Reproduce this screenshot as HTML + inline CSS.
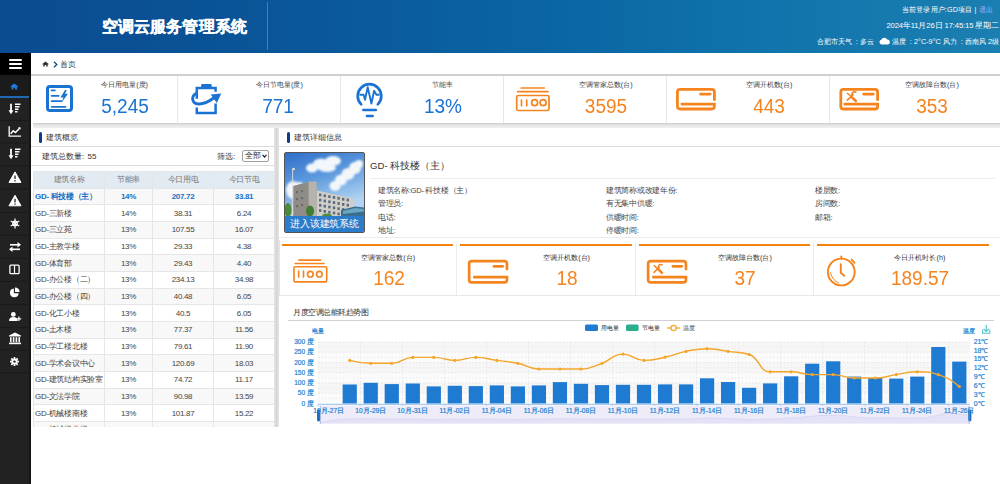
<!DOCTYPE html>
<html><head><meta charset="utf-8">
<style>
*{margin:0;padding:0;box-sizing:border-box}
html,body{width:1000px;height:484px;overflow:hidden;background:#fff;font-family:"Liberation Sans",sans-serif;color:#333}
.a{position:absolute}
#hdr{left:0;top:0;width:1000px;height:53px;background:linear-gradient(90deg,#0b4b91 0%,#0a5498 25%,#0a65a4 55%,#1276ad 80%,#1c7fb1 100%)}
#hdr .t{left:102px;top:17px;font-size:16px;font-weight:bold;color:#fff;white-space:nowrap;letter-spacing:0.1px;-webkit-text-stroke:0.3px #fff}
#hdr .sep{left:267px;top:2px;width:1px;height:48px;background:rgba(255,255,255,0.25)}
.hr{right:1px;color:#fff;font-size:8px;white-space:nowrap;text-align:right}
#side{left:0;top:53px;width:31px;height:431px;background:#222}
#side .hb{left:0;top:0;width:31px;height:22px;background:#000}
#side .hb i{position:absolute;left:9px;width:13px;height:2px;background:#fff;border-radius:1px}
.si{position:absolute;left:0;width:31px;height:23px}
#bc{left:31px;top:53px;width:969px;height:23px;background:#fff;border-bottom:2px solid #d0d0d0}
#stats{left:31px;top:76px;width:969px;height:47px;background:#fff}
.ssep{top:0;width:1px;height:47px;background:#e8e8e8}
.stt{font-size:7.2px;line-height:9px;color:#3c3c3c;white-space:nowrap;text-align:center;width:120px}
.stn{font-size:20px;line-height:22px;white-space:nowrap;text-align:center;width:120px;transform:scaleX(0.95)}
#gap{left:33px;top:123px;width:967px;height:5px;z-index:1;background:linear-gradient(#cbcbcb,#dedede 30%,#e9e9e9 60%,#efefef)}
#lp{left:31px;top:127px;width:244px;height:300px;background:#fff;overflow:hidden}
#mid{left:274px;top:127px;width:5px;height:300px;background:linear-gradient(90deg,#e6e6e6,#d6d6d6 50%,#e4e4e4)}
#rp{left:279px;top:127px;width:721px;height:300px;background:#fff;overflow:hidden}
.ptl{font-size:8px;color:#333;white-space:nowrap}
.bar{width:3px;height:11px;background:#0b3b8c;border-radius:1.5px}
.hl{height:1px;background:#dcdcdc}
table{border-collapse:collapse;position:absolute;left:2px;top:44px;width:241px;table-layout:fixed}
td,th{height:16.68px;font-size:8px;letter-spacing:-0.3px;font-weight:normal;text-align:center;border:1px solid #e6e6e6;white-space:nowrap;overflow:hidden;color:#444;padding:0;line-height:15px}
th{background:#e3ebf2;color:#777;height:16.5px}
tr.o td{background:#f8f8f8}
td:first-child{text-align:left;padding-left:1px}
tr.sel td{color:#1a6fc6;font-weight:bold}
.inf{font-size:7.6px;color:#444;white-space:nowrap;letter-spacing:-0.3px}
.bx{top:117px;height:52px}
.bxb{top:0;height:2px;background:#f5820f}
.bt{font-size:7.2px;line-height:9px;color:#333;white-space:nowrap;text-align:center;width:120px}
.bn{font-size:20px;line-height:22px;color:#f5841f;white-space:nowrap;text-align:center;width:120px;transform:scaleX(0.95)}
.yl{font-size:6.6px;color:#1f83d0;-webkit-text-stroke:0.2px #1f83d0;white-space:nowrap;text-align:right;width:30px;line-height:8px}
.yr{font-size:6.9px;color:#1f83d0;-webkit-text-stroke:0.2px #1f83d0;white-space:nowrap;line-height:8px}
.xl{font-size:6.6px;color:#1f83d0;-webkit-text-stroke:0.2px #1f83d0;white-space:nowrap;text-align:center;width:50px;line-height:8px}
</style></head><body>
<!-- header -->
<div id="hdr" class="a">
  <div class="a t">空调云服务管理系统</div>
  <div class="a sep"></div>
  <div class="a hr" style="top:5px;right:7px;font-size:7.2px;letter-spacing:0.15px">当前登录用户:GD项目 | <span style="color:#9fb4ff">退出</span></div>
  <div class="a hr" style="top:21px;font-size:7.6px;letter-spacing:-0.1px">2024年11月26日 17:45:15 星期二</div>
  <div class="a hr" style="top:37px;font-size:7.3px">合肥市天气<span style="display:inline-block;width:6px">:</span>&nbsp;多云 <svg width="11" height="8" viewBox="0 0 11 8" style="vertical-align:-1px;margin:0 2px 0 3px"><path d="M2.5 7.5 A2.4 2.4 0 0 1 2.3 2.8 A3.2 3.2 0 0 1 8.2 2.6 A2.45 2.45 0 0 1 8.6 7.5 Z" fill="#fff"/></svg>温度<span style="display:inline-block;width:6px">:</span>&nbsp;2°C-9°C 风力<span style="display:inline-block;width:6px">:</span>&nbsp;西南风 2级</div>
</div>
<!-- sidebar -->
<div id="side" class="a">
  <div class="a hb"><i style="top:6px"></i><i style="top:10px"></i><i style="top:14px"></i></div>
  <div class="si" style="top:22px;width:29px;background:#1b1b1b;border-bottom:2px solid #1f68b4">
    <svg class="a" style="left:10px;top:7.5px" width="8.5" height="7" viewBox="0 0 11 9"><path d="M5.5 0.5 L0.5 4.6 L1.3 5.4 L2 4.8 V8.5 H4.4 V6.2 H6.6 V8.5 H9 V4.8 L9.7 5.4 L10.5 4.6 Z" fill="#1e7be0"/></svg>
  </div>
</div>
<!-- breadcrumb -->
<!--SIDEICONS--><svg class="a" style="left:0;top:0" width="31" height="484" viewBox="0 0 31 484"><rect x="29" y="74" width="2" height="410" fill="#151515"/><rect x="0" y="119.9" width="31" height="1" fill="#1a1a1a"/><rect x="0" y="142.5" width="31" height="1" fill="#1a1a1a"/><rect x="0" y="165.0" width="31" height="1" fill="#1a1a1a"/><rect x="0" y="188.6" width="31" height="1" fill="#1a1a1a"/><rect x="0" y="212.0" width="31" height="1" fill="#1a1a1a"/><rect x="0" y="234.6" width="31" height="1" fill="#1a1a1a"/><rect x="0" y="258.0" width="31" height="1" fill="#1a1a1a"/><rect x="0" y="280.8" width="31" height="1" fill="#1a1a1a"/><rect x="0" y="303.8" width="31" height="1" fill="#1a1a1a"/><rect x="0" y="327.2" width="31" height="1" fill="#1a1a1a"/><rect x="0" y="349.6" width="31" height="1" fill="#1a1a1a"/><rect x="0" y="372.4" width="31" height="1" fill="#1a1a1a"/><g transform="translate(15 108.7)"><path d="M-4 -5 V3" stroke="#fff" stroke-width="1.8"/><path d="M-6.5 1.5 L-4 5.5 L-1.5 1.5 Z" fill="#fff"/><path d="M0 -4.5 H5.5 M0 -2 H4.5 M0 0.5 H3.5 M0 3 H2.5" stroke="#fff" stroke-width="1.6"/></g><g transform="translate(15 131.3)"><path d="M-5.8 -5 V4.8 H6" fill="none" stroke="#fff" stroke-width="1.3"/><path d="M-4.3 2.5 L-1.8 -0.5 L0.5 1.2 L4.8 -3.2" fill="none" stroke="#fff" stroke-width="1.5"/><path d="M3 -4 L5.5 -4 L5.5 -1.5 Z" fill="#fff"/></g><g transform="translate(15 153.8)"><path d="M-4 -5 V3" stroke="#fff" stroke-width="1.8"/><path d="M-6.5 1.5 L-4 5.5 L-1.5 1.5 Z" fill="#fff"/><path d="M0 -4.5 H5.5 M0 -2 H4.5 M0 0.5 H3.5 M0 3 H2.5" stroke="#fff" stroke-width="1.6"/></g><g transform="translate(15 177.4)"><path d="M0 -5.5 L6 5 H-6 Z" fill="#fff" stroke="#fff" stroke-width="1" stroke-linejoin="round"/><path d="M0 -2 V1.6 M0 2.8 V4" stroke="#222" stroke-width="1.3"/></g><g transform="translate(15 200.8)"><path d="M0 -5.5 L6 5 H-6 Z" fill="#fff" stroke="#fff" stroke-width="1" stroke-linejoin="round"/><path d="M0 -2 V1.6 M0 2.8 V4" stroke="#222" stroke-width="1.3"/></g><g transform="translate(15 223.4)" stroke="#fff" stroke-width="1.2" fill="none"><path d="M0 -5 V5 M-4.3 -2.5 L4.3 2.5 M-4.3 2.5 L4.3 -2.5"/><circle r="2.3"/></g><g transform="translate(15 246.8)"><path d="M-5 -2 H3" stroke="#fff" stroke-width="1.6"/><path d="M2.5 -4.8 L6 -2 L2.5 0.8 Z" fill="#fff"/><path d="M5 2.5 H-3" stroke="#fff" stroke-width="1.6"/><path d="M-2.5 -0.3 L-6 2.5 L-2.5 5.3 Z" fill="#fff"/></g><g transform="translate(14.5 269.4)"><rect x="-4.6" y="-4.3" width="9.2" height="8.6" rx="1" fill="none" stroke="#fff" stroke-width="1.3"/><path d="M0 -4 V4" stroke="#fff" stroke-width="1.2"/></g><g transform="translate(14.5 292.6) scale(0.88)"><path d="M-0.7 -4.8 A5 5 0 1 0 4.8 0.7 H-0.7 Z" fill="#fff"/><path d="M0.6 -5.8 A5 5 0 0 1 5.8 -0.6 H0.6 Z" fill="#fff"/></g><g transform="translate(15 316.5) scale(0.92)"><circle cx="-1.8" cy="-2.3" r="2.6" fill="#fff"/><path d="M-6.5 5 Q-6.5 0.5 -1.8 0.5 Q2.9 0.5 2.9 5 Z" fill="#fff"/><path d="M4.2 0 V5 M1.7 2.5 H6.7" stroke="#fff" stroke-width="1.3"/></g><g transform="translate(15 338.4)" fill="#fff"><path d="M0 -6 L6 -3 V-2 H-6 V-3 Z"/><rect x="-5" y="-1.2" width="1.6" height="5"/><rect x="-2.2" y="-1.2" width="1.6" height="5"/><rect x="0.6" y="-1.2" width="1.6" height="5"/><rect x="3.4" y="-1.2" width="1.6" height="5"/><rect x="-6" y="4.2" width="12" height="1.6"/></g><g transform="translate(14.5 361.6) scale(0.8)" fill="#fff"><rect x="-1.1" y="-5.6" width="2.2" height="2.4" transform="rotate(0)"/><rect x="-1.1" y="-5.6" width="2.2" height="2.4" transform="rotate(45)"/><rect x="-1.1" y="-5.6" width="2.2" height="2.4" transform="rotate(90)"/><rect x="-1.1" y="-5.6" width="2.2" height="2.4" transform="rotate(135)"/><rect x="-1.1" y="-5.6" width="2.2" height="2.4" transform="rotate(180)"/><rect x="-1.1" y="-5.6" width="2.2" height="2.4" transform="rotate(225)"/><rect x="-1.1" y="-5.6" width="2.2" height="2.4" transform="rotate(270)"/><rect x="-1.1" y="-5.6" width="2.2" height="2.4" transform="rotate(315)"/><circle r="3.8"/><circle r="1.5" fill="#222"/></g></svg><!--/SIDEICONS-->
<div id="bc" class="a">
  <svg class="a" style="left:11px;top:8px" width="7" height="6" viewBox="0 0 11 9"><path d="M5.5 0.5 L0.5 4.6 L1.3 5.4 L2 4.8 V8.5 H4.4 V6.2 H6.6 V8.5 H9 V4.8 L9.7 5.4 L10.5 4.6 Z" fill="#333"/></svg>
  <svg class="a" style="left:22px;top:8px" width="5" height="7" viewBox="0 0 5 7"><path d="M1 0.8 L3.8 3.5 L1 6.2" stroke="#1a4f8a" stroke-width="1.4" fill="none"/></svg>
  <div class="a" style="left:29px;top:6px;font-size:8px;color:#444">首页</div>
</div>
<!-- stats -->
<div id="stats" class="a">
  <div class="a ssep" style="left:146px"></div>
  <div class="a ssep" style="left:309px"></div>
  <div class="a ssep" style="left:472px"></div>
  <div class="a ssep" style="left:635px"></div>
  <div class="a ssep" style="left:798px"></div>
  <!-- card1 icon: doc w/ lightning -->
  <svg class="a" style="left:15px;top:9px" width="27" height="27" viewBox="0 0 27 27">
    <rect x="1.5" y="1.5" width="24" height="24" rx="2.5" fill="none" stroke="#1a73d2" stroke-width="3"/>
    <g stroke="#1a73d2" stroke-width="1.8" stroke-linecap="round" fill="none">
      <path d="M5.6 5.4 H8.8"/><path d="M5.6 10.8 H12.6"/><path d="M5.6 16.2 H15.4"/><path d="M5.6 21.8 H19.5"/>
    </g>
    <path d="M19 5 L14.4 12.6 H17.4 L15.6 17.4 L22 8.8 H19 L20.8 5 Z" fill="#1a73d2"/>
  </svg>
  <div class="a stt" style="left:33.6px;top:4px">今日用电量(度)</div>
  <div class="a stn" style="left:33.6px;top:19px;color:#1a73d2">5,245</div>
  <!-- card2 icon battery -->
  <svg class="a" style="left:154px;top:4px" width="50" height="38" viewBox="0 0 50 38">
    <rect x="16.1" y="3.9" width="10.6" height="3.4" rx="1" fill="#1a73d2"/>
    <path d="M11.8 18.8 V8.1 H30.6 V11.8 M30.6 23.5 V33 H11.8 V27.5" fill="none" stroke="#1a73d2" stroke-width="2.5"/>
    <path d="M11 13.5 C6 16.5, 6.5 23.5, 13.5 24 C18.5 24.3, 24 21.5, 29.5 17.5" fill="none" stroke="#1a73d2" stroke-width="2.8" stroke-linecap="round"/>
    <path d="M25.8 14.6 L36.3 13.5 L31.8 23 Z" fill="#1a73d2"/>
  </svg>
  <div class="a stt" style="left:188.5px;top:4px">今日节电量(度)</div>
  <div class="a stn" style="left:187.3px;top:19px;color:#1a73d2">771</div>
  <!-- card3 bulb -->
  <svg class="a" style="left:319px;top:2px" width="50" height="44" viewBox="0 0 50 44">
    <path d="M11.2 26.4 A11.8 11.8 0 1 1 27.8 26.4" fill="none" stroke="#1a73d2" stroke-width="2.7" stroke-linecap="round"/>
    <path d="M9.5 16.8 H13.6 L15 21.8 L17.7 9.1 L21.4 25.5 L24.1 12.7 L26.4 16.8 H29.5" fill="none" stroke="#1a73d2" stroke-width="1.9" stroke-linejoin="round"/>
    <path d="M13.4 32 H25.8 M17 38 H22.6" stroke="#1a73d2" stroke-width="2.7" stroke-linecap="round"/>
  </svg>
  <div class="a stt" style="left:351.5px;top:4px">节能率</div>
  <div class="a stn" style="left:351.9px;top:19px;color:#1a73d2">13%</div>
  <!-- card4 -->
  <svg class="a" style="left:479px;top:4px" width="50" height="36" viewBox="0 0 50 36">
    <g fill="none" stroke="#f5841f" stroke-width="1.7" stroke-linecap="round">
      <path d="M11.2 8 H34.2 M7.8 11.7 H37.9"/>
      <rect x="6.7" y="15.5" width="32.3" height="15" rx="1.5"/>
      <path d="M11.5 20 V25.7 M16.7 20 V25.7"/>
      <circle cx="24.6" cy="22.7" r="3"/><circle cx="33.1" cy="22.7" r="3"/>
    </g>
  </svg>
  <div class="a stt" style="left:514.7px;top:4px">空调管家总数(台)</div>
  <div class="a stn" style="left:514.9px;top:19px;color:#f5841f">3595</div>
  <!-- card5 -->
  <svg class="a" style="left:639px;top:4px" width="50" height="36" viewBox="0 0 50 36">
    <path d="M44.4 19.7 V12 Q44.4 9.3 41.7 9.3 H10.1 Q7.4 9.3 7.4 12 V26.3 Q7.4 29 10.1 29 H41.7 Q44.4 29 44.4 26.3 V24.2 H11.9" fill="none" stroke="#f5841f" stroke-width="2.8" stroke-linecap="round"/>
    <path d="M30.5 14.1 H40.2" stroke="#f5841f" stroke-width="2.8" stroke-linecap="round"/>
  </svg>
  <div class="a stt" style="left:678.0px;top:4px">空调开机数(台)</div>
  <div class="a stn" style="left:677.5px;top:19px;color:#f5841f">443</div>
  <!-- card6 -->
  <svg class="a" style="left:804px;top:4px" width="50" height="36" viewBox="0 0 50 36">
    <path d="M42.6 19.7 V12 Q42.6 9.4 40 9.4 H8.4 Q5.8 9.4 5.8 12 V26.4 Q5.8 29 8.4 29 H40 Q42.6 29 42.6 26.4 V24.2 H9.7" fill="none" stroke="#f5841f" stroke-width="2.8" stroke-linecap="round"/>
    <path d="M28.6 14.1 H38.3" stroke="#f5841f" stroke-width="2.8" stroke-linecap="round"/>
    <path d="M12.4 13.2 L17.5 17.8" stroke="#f5841f" stroke-width="1.5" stroke-linecap="round"/>
    <path d="M17.3 17.6 L20.8 21" stroke="#f5841f" stroke-width="2.6" stroke-linecap="round"/>
    <path d="M12.3 20.2 L18 14.8" stroke="#f5841f" stroke-width="1.6" stroke-linecap="round"/>
    <path d="M17.6 16 A2.3 2.3 0 1 1 21.4 12.6" fill="none" stroke="#f5841f" stroke-width="1.6"/>
  </svg>
  <div class="a stt" style="left:841.0px;top:4px">空调故障台数(台)</div>
  <div class="a stn" style="left:841.0px;top:19px;color:#f5841f">353</div>
</div>
<div id="gap" class="a"></div>
<div id="lp" class="a">
  <div class="a bar" style="left:8px;top:5px"></div>
  <div class="a ptl" style="left:15px;top:5px">建筑概览</div>
  <div class="a hl" style="left:0;top:19px;width:244px"></div>
  <div class="a ptl" style="left:11px;top:24px">建筑总数量<span style="display:inline-block;width:5.5px">:</span>55</div>
  <div class="a ptl" style="left:186px;top:24px">筛选<span style="display:inline-block;width:5.5px">:</span></div>
  <div class="a" style="left:211px;top:23px;width:27px;height:12px;border:1px solid #a0a0a0;border-radius:2px;font-size:8px;line-height:10px;padding-left:2px;color:#333">全部<svg style="position:absolute;right:1px;top:3px" width="5" height="4" viewBox="0 0 5 4"><path d="M0.5 0.8 L2.5 3 L4.5 0.8" stroke="#222" stroke-width="1.2" fill="none"/></svg></div>
  <div class="a hl" style="left:0;top:38px;width:244px"></div>
  <table><colgroup><col style="width:71px"><col style="width:48px"><col style="width:61px"><col style="width:61px"></colgroup>
  <tr><th>建筑名称</th><th>节能率</th><th>今日用电</th><th>今日节电</th></tr>
  <tr class="o sel"><td>GD- 科技楼（主）</td><td>14%</td><td>207.72</td><td>33.81</td></tr>
  <tr><td>GD-三新楼</td><td>14%</td><td>38.31</td><td>6.24</td></tr>
  <tr class="o"><td>GD-三立苑</td><td>13%</td><td>107.55</td><td>16.07</td></tr>
  <tr><td>GD-主教学楼</td><td>13%</td><td>29.33</td><td>4.38</td></tr>
  <tr class="o"><td>GD-体育部</td><td>13%</td><td>29.43</td><td>4.40</td></tr>
  <tr><td>GD-办公楼（二）</td><td>13%</td><td>234.13</td><td>34.98</td></tr>
  <tr class="o"><td>GD-办公楼（四）</td><td>13%</td><td>40.48</td><td>6.05</td></tr>
  <tr><td>GD-化工小楼</td><td>13%</td><td>40.5</td><td>6.05</td></tr>
  <tr class="o"><td>GD-土木楼</td><td>13%</td><td>77.37</td><td>11.56</td></tr>
  <tr><td>GD-学工楼北楼</td><td>13%</td><td>79.61</td><td>11.90</td></tr>
  <tr class="o"><td>GD-学术会议中心</td><td>13%</td><td>120.69</td><td>18.03</td></tr>
  <tr><td>GD-建筑结构实验室</td><td>13%</td><td>74.72</td><td>11.17</td></tr>
  <tr class="o"><td>GD-文法学院</td><td>13%</td><td>90.98</td><td>13.59</td></tr>
  <tr><td>GD-机械楼南楼</td><td>13%</td><td>101.87</td><td>15.22</td></tr>
  <tr class="o"><td>GD-机械楼北楼</td><td>13%</td><td>155.31</td><td>23.20</td></tr>
  <tr><td>GD-计算机楼</td><td>13%</td><td>88.10</td><td>13.16</td></tr>
  </table>
  <div class="a" style="left:243px;top:44px;width:2px;height:256px;background:#d5d5d5"></div>
</div>
<div id="mid" class="a"></div>
<div id="rp" class="a">
  <div class="a bar" style="left:8px;top:5px"></div>
  <div class="a ptl" style="left:15px;top:5px">建筑详细信息</div>
  <div class="a hl" style="left:0;top:19px;width:721px"></div>
  <!-- building image -->
  <div class="a" style="left:5px;top:25px;width:81px;height:81px;border:1px solid #555;border-radius:2px;overflow:hidden;background:#4d8fd6">
    <svg class="a" style="left:0;top:0" width="79" height="79" viewBox="0 0 79 79">
      <defs><linearGradient id="sky" x1="0" y1="0" x2="0.3" y2="1"><stop offset="0" stop-color="#2f6fca"/><stop offset="0.4" stop-color="#5e9ade"/><stop offset="0.8" stop-color="#b2d4f2"/></linearGradient>
      <filter id="bl" x="-20%" y="-20%" width="140%" height="140%"><feGaussianBlur stdDeviation="1"/></filter></defs>
      <rect width="79" height="79" fill="url(#sky)"/>
      <g fill="#f3f7fb" filter="url(#bl)">
        <ellipse cx="27" cy="15" rx="6" ry="4.5"/><ellipse cx="36" cy="11" rx="8" ry="5.5"/><ellipse cx="48" cy="8" rx="8" ry="5"/><ellipse cx="42" cy="15" rx="9" ry="4"/>
        <ellipse cx="50" cy="33" rx="5.5" ry="5"/><ellipse cx="56" cy="27" rx="6" ry="5.5"/><ellipse cx="63" cy="21" rx="6.5" ry="6"/><ellipse cx="70" cy="15" rx="6" ry="6"/><ellipse cx="74" cy="11" rx="4" ry="4"/>
        <ellipse cx="8" cy="37" rx="7" ry="9"/><ellipse cx="14" cy="33" rx="5" ry="4"/>
      </g>
      <path d="M31.6 37.5 L68 45.5 L68 64 L31.6 64 Z" fill="#d2cfc9"/>
      <rect x="34.0" y="40.5" width="2.4" height="2.8" fill="#5b6c80"/><rect x="38.6" y="41.4" width="2.4" height="2.8" fill="#5b6c80"/><rect x="43.2" y="42.2" width="2.4" height="2.8" fill="#5b6c80"/><rect x="47.8" y="43.0" width="2.4" height="2.8" fill="#5b6c80"/><rect x="52.4" y="43.9" width="2.4" height="2.8" fill="#5b6c80"/><rect x="57.0" y="44.8" width="2.4" height="2.8" fill="#5b6c80"/><rect x="61.6" y="45.6" width="2.4" height="2.8" fill="#5b6c80"/><rect x="34.0" y="45.7" width="2.4" height="2.8" fill="#5b6c80"/><rect x="38.6" y="46.6" width="2.4" height="2.8" fill="#5b6c80"/><rect x="43.2" y="47.4" width="2.4" height="2.8" fill="#5b6c80"/><rect x="47.8" y="48.2" width="2.4" height="2.8" fill="#5b6c80"/><rect x="52.4" y="49.1" width="2.4" height="2.8" fill="#5b6c80"/><rect x="57.0" y="50.0" width="2.4" height="2.8" fill="#5b6c80"/><rect x="61.6" y="50.8" width="2.4" height="2.8" fill="#5b6c80"/><rect x="34.0" y="50.9" width="2.4" height="2.8" fill="#5b6c80"/><rect x="38.6" y="51.8" width="2.4" height="2.8" fill="#5b6c80"/><rect x="43.2" y="52.6" width="2.4" height="2.8" fill="#5b6c80"/><rect x="47.8" y="53.4" width="2.4" height="2.8" fill="#5b6c80"/><rect x="52.4" y="54.3" width="2.4" height="2.8" fill="#5b6c80"/><rect x="57.0" y="55.1" width="2.4" height="2.8" fill="#5b6c80"/><rect x="61.6" y="56.0" width="2.4" height="2.8" fill="#5b6c80"/><rect x="34.0" y="56.1" width="2.4" height="2.8" fill="#5b6c80"/><rect x="38.6" y="57.0" width="2.4" height="2.8" fill="#5b6c80"/><rect x="43.2" y="57.8" width="2.4" height="2.8" fill="#5b6c80"/><rect x="47.8" y="58.6" width="2.4" height="2.8" fill="#5b6c80"/><rect x="52.4" y="59.5" width="2.4" height="2.8" fill="#5b6c80"/><rect x="57.0" y="60.4" width="2.4" height="2.8" fill="#5b6c80"/><rect x="61.6" y="61.2" width="2.4" height="2.8" fill="#5b6c80"/>
      <path d="M8.4 33 L23.5 29 L31.6 29 L31.6 64 L8.4 64 Z" fill="#a19e98"/>
      <path d="M23.5 28.5 H31.6 V64 H23.5 Z" fill="#b6b3ad"/>
      <path d="M8.4 33 L23.5 29 V64 H8.4 Z" fill="#8f8c88"/>
      <g fill="#6c6a68"><rect x="11" y="38" width="2" height="2.2"/><rect x="16" y="37" width="2" height="2.2"/><rect x="11" y="45" width="2" height="2.2"/><rect x="16" y="44" width="2" height="2.2"/><rect x="11" y="52" width="2" height="2.2"/><rect x="16" y="51" width="2" height="2.2"/></g>
      <path d="M56 57 L70 53.5 L79 54.5 L79 64 L56 64 Z" fill="#3a6f8f"/>
      <path d="M58 58 L70 55 L79 56 V58.5 L58 61 Z" fill="#6aa6c4"/>
      <ellipse cx="25" cy="58" rx="4" ry="5.5" fill="#3f7d33"/><ellipse cx="3" cy="57" rx="3.5" ry="7" fill="#4b8a3a"/><ellipse cx="42" cy="63" rx="5" ry="2.5" fill="#4f8f3c"/>
      <rect x="7.2" y="16" width="0.9" height="48" fill="#dcdcdc"/><circle cx="8.6" cy="16" r="1.3" fill="#eee6b8"/>
    </svg>
    <div class="a" style="left:0;top:63px;width:79px;height:16px;background:#2b7ccb;color:#fff;font-size:10px;line-height:16px;text-align:center;white-space:nowrap;letter-spacing:-0.1px">进入该建筑系统</div>
  </div>
  <div class="a" style="left:91px;top:33px;font-size:9.6px;color:#333;white-space:nowrap">GD- 科技楼（主）</div>
  <div class="a hl" style="left:91px;top:51px;width:625px;background:#eeeeee"></div>
  <div class="a inf" style="left:99px;top:59px">建筑名称:GD- 科技楼（主）</div>
  <div class="a inf" style="left:99px;top:72px">管理员:</div>
  <div class="a inf" style="left:99px;top:86px">电话:</div>
  <div class="a inf" style="left:99px;top:99px">地址:</div>
  <div class="a inf" style="left:327px;top:59px">建筑简称或改建年份:</div>
  <div class="a inf" style="left:327px;top:72px">有无集中供暖:</div>
  <div class="a inf" style="left:327px;top:86px">供暖时间:</div>
  <div class="a inf" style="left:327px;top:99px">停暖时间:</div>
  <div class="a inf" style="left:536px;top:59px">楼层数:</div>
  <div class="a inf" style="left:536px;top:72px">房间数:</div>
  <div class="a inf" style="left:536px;top:86px">邮箱:</div>
  <div class="a hl" style="left:0;top:110px;width:721px;background:#ececec"></div>
  <!-- 4 boxes -->
  <div class="a" style="left:0;top:113px;width:721px;height:56px">
    <div class="a" style="left:0;top:0;width:1px;height:56px;background:#e6e6e6"></div>
    <div class="a" style="left:177px;top:3px;width:1px;height:53px;background:#ececec"></div>
    <div class="a" style="left:356px;top:3px;width:1px;height:53px;background:#ececec"></div>
    <div class="a" style="left:534px;top:3px;width:1px;height:53px;background:#ececec"></div>
    <div class="a hl" style="left:0;top:55px;width:721px;background:#e8e8e8"></div>
    <div class="a bxb" style="left:3px;top:4px;width:171px"></div>
    <div class="a bxb" style="left:181px;top:4px;width:172px"></div>
    <div class="a bxb" style="left:360px;top:4px;width:171px"></div>
    <div class="a bxb" style="left:538px;top:4px;width:172px"></div>
    <svg class="a" style="left:10.5px;top:17px" width="41.5" height="29" viewBox="0 0 40 28">
      <g fill="none" stroke="#f5841f" stroke-width="1.6" stroke-linecap="round">
        <path d="M8.5 3 H29.6 M5 6.3 H32.8"/>
        <rect x="3.8" y="9.4" width="31.6" height="14.6" rx="1.3"/>
        <path d="M8.3 13.6 V19.4 M13 13.6 V19.4"/>
        <circle cx="19.6" cy="16.6" r="2.7"/><circle cx="28.3" cy="16.6" r="2.7"/>
      </g>
    </svg>
    <div class="a bt" style="left:49.2px;top:12.7px">空调管家总数(台)</div>
    <div class="a bn" style="left:49.5px;top:27.1px">162</div>
    <svg class="a" style="left:185.5px;top:16.5px" width="45.5" height="29" viewBox="0 0 44 28">
      <path d="M40.6 11.5 V6.5 Q40.6 4 38.1 4 H6.5 Q4 4 4 6.5 V22 Q4 24.5 6.5 24.5 H38.1 Q40.6 24.5 40.6 22 V19.5 H9" fill="none" stroke="#f5841f" stroke-width="2.6" stroke-linecap="round"/>
      <path d="M28 9 H36.5" stroke="#f5841f" stroke-width="2.6" stroke-linecap="round"/>
    </svg>
    <div class="a bt" style="left:227.6px;top:12.7px">空调开机数(台)</div>
    <div class="a bn" style="left:228.1px;top:27.1px">18</div>
    <svg class="a" style="left:364.5px;top:16.5px" width="45.5" height="29" viewBox="0 0 44 28">
      <path d="M40.6 11.5 V6.5 Q40.6 4 38.1 4 H6.5 Q4 4 4 6.5 V22 Q4 24.5 6.5 24.5 H38.1 Q40.6 24.5 40.6 22 V19.5 H9" fill="none" stroke="#f5841f" stroke-width="2.6" stroke-linecap="round"/>
      <path d="M28 9 H36.5" stroke="#f5841f" stroke-width="2.6" stroke-linecap="round"/>
      <path d="M9.8 8.2 L14.4 12.4" stroke="#f5841f" stroke-width="1.4" stroke-linecap="round"/>
      <path d="M14.2 12.2 L17.4 15.3" stroke="#f5841f" stroke-width="2.4" stroke-linecap="round"/>
      <path d="M9.7 14.8 L14.8 9.9" stroke="#f5841f" stroke-width="1.5" stroke-linecap="round"/>
      <path d="M14.5 11 A2.1 2.1 0 1 1 17.9 7.9" fill="none" stroke="#f5841f" stroke-width="1.5"/>
    </svg>
    <div class="a bt" style="left:405.9px;top:12.7px">空调故障台数(台)</div>
    <div class="a bn" style="left:405.6px;top:27.1px">37</div>
    <svg class="a" style="left:543px;top:11px" width="36" height="36" viewBox="0 0 36 36">
      <g fill="none" stroke="#f5841f" stroke-linecap="round">
        <circle cx="19.3" cy="21" r="13.4" stroke-width="1.9"/>
        <path d="M19.3 5.5 V7.6" stroke-width="1.9"/>
        <path d="M29.7 8.6 L32.5 11.8" stroke-width="1.9"/>
        <path d="M18.8 13.3 V21.7 L22.3 24.7" stroke-width="1.9"/>
        <path d="M8.4 21.7 Q10 29 16.8 32" stroke-width="1"/>
      </g>
    </svg>
    <div class="a bt" style="left:580.9px;top:12.7px">今日开机时长(h)</div>
    <div class="a bn" style="left:580.9px;top:27.1px">189.57</div>
  </div>
  <!-- chart -->
  <div class="a ptl" style="left:14px;top:180px;letter-spacing:-0.5px">月度空调总能耗趋势图</div>
  <div class="a" style="left:9px;top:193px;width:706px;height:1px;background:#d0d0d0"></div>
  <div id="chart" class="a" style="left:0;top:194px;width:721px;height:106px"></div>
</div>
<!--CHART-->
<svg class="a" style="left:0;top:0" width="1000" height="484" viewBox="0 0 1000 484">
<rect x="318.2" y="342.00" width="651.6" height="10.25" fill="#f6f6f6"/>
<rect x="318.2" y="352.25" width="651.6" height="10.25" fill="#fbfbfb"/>
<rect x="318.2" y="362.50" width="651.6" height="10.25" fill="#f6f6f6"/>
<rect x="318.2" y="372.75" width="651.6" height="10.25" fill="#fbfbfb"/>
<rect x="318.2" y="383.00" width="651.6" height="10.25" fill="#f6f6f6"/>
<rect x="318.2" y="393.25" width="651.6" height="10.25" fill="#fbfbfb"/>
<path d="M318.2 342.00 H969.8" stroke="#e4e4e4" stroke-width="1" stroke-dasharray="1.5 2"/>
<path d="M318.2 347.12 H969.8" stroke="#ebebeb" stroke-width="1" stroke-dasharray="1.5 2"/>
<path d="M318.2 352.25 H969.8" stroke="#e4e4e4" stroke-width="1" stroke-dasharray="1.5 2"/>
<path d="M318.2 357.38 H969.8" stroke="#ebebeb" stroke-width="1" stroke-dasharray="1.5 2"/>
<path d="M318.2 362.50 H969.8" stroke="#e4e4e4" stroke-width="1" stroke-dasharray="1.5 2"/>
<path d="M318.2 367.62 H969.8" stroke="#ebebeb" stroke-width="1" stroke-dasharray="1.5 2"/>
<path d="M318.2 372.75 H969.8" stroke="#e4e4e4" stroke-width="1" stroke-dasharray="1.5 2"/>
<path d="M318.2 377.88 H969.8" stroke="#ebebeb" stroke-width="1" stroke-dasharray="1.5 2"/>
<path d="M318.2 383.00 H969.8" stroke="#e4e4e4" stroke-width="1" stroke-dasharray="1.5 2"/>
<path d="M318.2 388.12 H969.8" stroke="#ebebeb" stroke-width="1" stroke-dasharray="1.5 2"/>
<path d="M318.2 393.25 H969.8" stroke="#e4e4e4" stroke-width="1" stroke-dasharray="1.5 2"/>
<path d="M318.2 398.38 H969.8" stroke="#ebebeb" stroke-width="1" stroke-dasharray="1.5 2"/>
<path d="M360.24 342.0 V403.5" stroke="#e6e6e6" stroke-width="1" stroke-dasharray="1.5 2"/>
<path d="M402.28 342.0 V403.5" stroke="#e6e6e6" stroke-width="1" stroke-dasharray="1.5 2"/>
<path d="M444.32 342.0 V403.5" stroke="#e6e6e6" stroke-width="1" stroke-dasharray="1.5 2"/>
<path d="M486.36 342.0 V403.5" stroke="#e6e6e6" stroke-width="1" stroke-dasharray="1.5 2"/>
<path d="M528.40 342.0 V403.5" stroke="#e6e6e6" stroke-width="1" stroke-dasharray="1.5 2"/>
<path d="M570.44 342.0 V403.5" stroke="#e6e6e6" stroke-width="1" stroke-dasharray="1.5 2"/>
<path d="M612.48 342.0 V403.5" stroke="#e6e6e6" stroke-width="1" stroke-dasharray="1.5 2"/>
<path d="M654.52 342.0 V403.5" stroke="#e6e6e6" stroke-width="1" stroke-dasharray="1.5 2"/>
<path d="M696.56 342.0 V403.5" stroke="#e6e6e6" stroke-width="1" stroke-dasharray="1.5 2"/>
<path d="M738.60 342.0 V403.5" stroke="#e6e6e6" stroke-width="1" stroke-dasharray="1.5 2"/>
<path d="M780.64 342.0 V403.5" stroke="#e6e6e6" stroke-width="1" stroke-dasharray="1.5 2"/>
<path d="M822.68 342.0 V403.5" stroke="#e6e6e6" stroke-width="1" stroke-dasharray="1.5 2"/>
<path d="M864.72 342.0 V403.5" stroke="#e6e6e6" stroke-width="1" stroke-dasharray="1.5 2"/>
<path d="M906.76 342.0 V403.5" stroke="#e6e6e6" stroke-width="1" stroke-dasharray="1.5 2"/>
<path d="M948.80 342.0 V403.5" stroke="#e6e6e6" stroke-width="1" stroke-dasharray="1.5 2"/>
<rect x="342.63" y="384.50" width="14.2" height="19.00" fill="#1f7ad2"/>
<rect x="363.65" y="382.80" width="14.2" height="20.70" fill="#1f7ad2"/>
<rect x="384.67" y="384.10" width="14.2" height="19.40" fill="#1f7ad2"/>
<rect x="405.69" y="383.50" width="14.2" height="20.00" fill="#1f7ad2"/>
<rect x="426.71" y="386.40" width="14.2" height="17.10" fill="#1f7ad2"/>
<rect x="447.73" y="385.80" width="14.2" height="17.70" fill="#1f7ad2"/>
<rect x="468.75" y="386.10" width="14.2" height="17.40" fill="#1f7ad2"/>
<rect x="489.77" y="385.40" width="14.2" height="18.10" fill="#1f7ad2"/>
<rect x="510.79" y="386.40" width="14.2" height="17.10" fill="#1f7ad2"/>
<rect x="531.81" y="385.40" width="14.2" height="18.10" fill="#1f7ad2"/>
<rect x="552.83" y="382.10" width="14.2" height="21.40" fill="#1f7ad2"/>
<rect x="573.85" y="383.80" width="14.2" height="19.70" fill="#1f7ad2"/>
<rect x="594.87" y="385.10" width="14.2" height="18.40" fill="#1f7ad2"/>
<rect x="615.89" y="384.80" width="14.2" height="18.70" fill="#1f7ad2"/>
<rect x="636.91" y="384.80" width="14.2" height="18.70" fill="#1f7ad2"/>
<rect x="657.93" y="384.40" width="14.2" height="19.10" fill="#1f7ad2"/>
<rect x="678.95" y="384.40" width="14.2" height="19.10" fill="#1f7ad2"/>
<rect x="699.97" y="378.30" width="14.2" height="25.20" fill="#1f7ad2"/>
<rect x="720.99" y="382.00" width="14.2" height="21.50" fill="#1f7ad2"/>
<rect x="742.01" y="387.80" width="14.2" height="15.70" fill="#1f7ad2"/>
<rect x="763.03" y="383.40" width="14.2" height="20.10" fill="#1f7ad2"/>
<rect x="784.05" y="376.30" width="14.2" height="27.20" fill="#1f7ad2"/>
<rect x="805.07" y="363.70" width="14.2" height="39.80" fill="#1f7ad2"/>
<rect x="826.09" y="361.30" width="14.2" height="42.20" fill="#1f7ad2"/>
<rect x="847.11" y="376.60" width="14.2" height="26.90" fill="#1f7ad2"/>
<rect x="868.13" y="378.00" width="14.2" height="25.50" fill="#1f7ad2"/>
<rect x="889.15" y="378.60" width="14.2" height="24.90" fill="#1f7ad2"/>
<rect x="910.17" y="376.60" width="14.2" height="26.90" fill="#1f7ad2"/>
<rect x="931.19" y="347.00" width="14.2" height="56.50" fill="#1f7ad2"/>
<rect x="952.21" y="361.60" width="14.2" height="41.90" fill="#1f7ad2"/>
<path d="M318.2 404.3 H969.8" stroke="#8fc0ea" stroke-width="1"/>
<path d="M318.20 404.3 V406.5" stroke="#8fc0ea" stroke-width="1"/>
<path d="M360.24 404.3 V406.5" stroke="#8fc0ea" stroke-width="1"/>
<path d="M402.28 404.3 V406.5" stroke="#8fc0ea" stroke-width="1"/>
<path d="M444.32 404.3 V406.5" stroke="#8fc0ea" stroke-width="1"/>
<path d="M486.36 404.3 V406.5" stroke="#8fc0ea" stroke-width="1"/>
<path d="M528.40 404.3 V406.5" stroke="#8fc0ea" stroke-width="1"/>
<path d="M570.44 404.3 V406.5" stroke="#8fc0ea" stroke-width="1"/>
<path d="M612.48 404.3 V406.5" stroke="#8fc0ea" stroke-width="1"/>
<path d="M654.52 404.3 V406.5" stroke="#8fc0ea" stroke-width="1"/>
<path d="M696.56 404.3 V406.5" stroke="#8fc0ea" stroke-width="1"/>
<path d="M738.60 404.3 V406.5" stroke="#8fc0ea" stroke-width="1"/>
<path d="M780.64 404.3 V406.5" stroke="#8fc0ea" stroke-width="1"/>
<path d="M822.68 404.3 V406.5" stroke="#8fc0ea" stroke-width="1"/>
<path d="M864.72 404.3 V406.5" stroke="#8fc0ea" stroke-width="1"/>
<path d="M906.76 404.3 V406.5" stroke="#8fc0ea" stroke-width="1"/>
<path d="M948.80 404.3 V406.5" stroke="#8fc0ea" stroke-width="1"/>
<path d="M349.73 360.40 C349.73 360.40 360.19 363.30 370.75 363.30 C381.21 363.30 381.46 363.30 391.77 363.30 C402.48 363.30 402.08 357.40 412.79 357.40 C423.10 357.40 423.35 357.40 433.81 357.40 C444.37 357.40 444.32 360.40 454.83 360.40 C465.34 360.40 465.34 357.40 475.85 357.40 C486.36 357.40 486.36 358.92 496.87 360.40 C507.38 361.87 507.52 361.18 517.89 363.30 C528.54 365.48 528.21 369.00 538.91 369.00 C549.23 369.00 549.42 369.00 559.93 369.00 C570.44 369.00 570.63 369.00 580.95 369.00 C591.65 369.00 591.73 366.93 601.97 363.30 C612.75 359.48 612.25 354.10 622.99 354.10 C633.27 354.10 633.33 360.40 644.01 360.40 C654.35 360.40 654.65 359.42 665.03 357.20 C675.67 354.92 675.39 353.56 686.05 351.40 C696.41 349.31 696.56 348.70 707.07 348.70 C717.58 348.70 717.59 349.95 728.09 351.40 C738.61 352.85 739.90 351.40 749.11 354.50 C760.92 358.47 758.27 371.80 770.13 371.80 C779.29 371.80 780.69 371.80 791.15 371.80 C801.71 371.80 801.61 374.60 812.17 374.60 C822.63 374.60 822.75 374.60 833.19 374.60 C843.77 374.60 843.63 378.00 854.21 378.00 C864.65 378.00 864.79 378.00 875.23 378.00 C885.81 378.00 885.72 376.15 896.25 374.60 C906.74 373.05 906.76 371.80 917.27 371.80 C927.78 371.80 928.46 371.80 938.29 374.60 C949.48 377.79 959.31 386.50 959.31 386.50" fill="none" stroke="#f4a62a" stroke-width="1.4"/>
<circle cx="349.73" cy="360.40" r="1.6" fill="#f4a62a"/>
<circle cx="370.75" cy="363.30" r="1.6" fill="#f4a62a"/>
<circle cx="391.77" cy="363.30" r="1.6" fill="#f4a62a"/>
<circle cx="412.79" cy="357.40" r="1.6" fill="#f4a62a"/>
<circle cx="433.81" cy="357.40" r="1.6" fill="#f4a62a"/>
<circle cx="454.83" cy="360.40" r="1.6" fill="#f4a62a"/>
<circle cx="475.85" cy="357.40" r="1.6" fill="#f4a62a"/>
<circle cx="496.87" cy="360.40" r="1.6" fill="#f4a62a"/>
<circle cx="517.89" cy="363.30" r="1.6" fill="#f4a62a"/>
<circle cx="538.91" cy="369.00" r="1.6" fill="#f4a62a"/>
<circle cx="559.93" cy="369.00" r="1.6" fill="#f4a62a"/>
<circle cx="580.95" cy="369.00" r="1.6" fill="#f4a62a"/>
<circle cx="601.97" cy="363.30" r="1.6" fill="#f4a62a"/>
<circle cx="622.99" cy="354.10" r="1.6" fill="#f4a62a"/>
<circle cx="644.01" cy="360.40" r="1.6" fill="#f4a62a"/>
<circle cx="665.03" cy="357.20" r="1.6" fill="#f4a62a"/>
<circle cx="686.05" cy="351.40" r="1.6" fill="#f4a62a"/>
<circle cx="707.07" cy="348.70" r="1.6" fill="#f4a62a"/>
<circle cx="728.09" cy="351.40" r="1.6" fill="#f4a62a"/>
<circle cx="749.11" cy="354.50" r="1.6" fill="#f4a62a"/>
<circle cx="770.13" cy="371.80" r="1.6" fill="#f4a62a"/>
<circle cx="791.15" cy="371.80" r="1.6" fill="#f4a62a"/>
<circle cx="812.17" cy="374.60" r="1.6" fill="#f4a62a"/>
<circle cx="833.19" cy="374.60" r="1.6" fill="#f4a62a"/>
<circle cx="854.21" cy="378.00" r="1.6" fill="#f4a62a"/>
<circle cx="875.23" cy="378.00" r="1.6" fill="#f4a62a"/>
<circle cx="896.25" cy="374.60" r="1.6" fill="#f4a62a"/>
<circle cx="917.27" cy="371.80" r="1.6" fill="#f4a62a"/>
<circle cx="938.29" cy="374.60" r="1.6" fill="#f4a62a"/>
<circle cx="959.31" cy="386.50" r="1.6" fill="#f4a62a"/>
<rect x="319.8" y="405.4" width="650.0" height="18" fill="#eeecf9"/>
<path d="M319.8 422.30 L341.5 419.11 L363.1 418.82 L384.8 419.04 L406.5 418.94 L428.1 419.43 L449.8 419.33 L471.5 419.38 L493.1 419.26 L514.8 419.43 L536.5 419.26 L558.1 418.70 L579.8 418.99 L601.5 419.21 L623.1 419.16 L644.8 419.16 L666.5 419.09 L688.1 419.09 L709.8 418.07 L731.5 418.69 L753.1 419.66 L774.8 418.92 L796.5 417.73 L818.1 415.61 L839.8 415.21 L861.5 417.78 L883.2 418.02 L904.8 418.12 L926.5 417.78 L948.2 412.81 L969.8 415.26 L969.8 423.4 L319.8 423.4 Z" fill="#e4e2f6"/>
<path d="M319.8 422.30 L341.5 419.11 L363.1 418.82 L384.8 419.04 L406.5 418.94 L428.1 419.43 L449.8 419.33 L471.5 419.38 L493.1 419.26 L514.8 419.43 L536.5 419.26 L558.1 418.70 L579.8 418.99 L601.5 419.21 L623.1 419.16 L644.8 419.16 L666.5 419.09 L688.1 419.09 L709.8 418.07 L731.5 418.69 L753.1 419.66 L774.8 418.92 L796.5 417.73 L818.1 415.61 L839.8 415.21 L861.5 417.78 L883.2 418.02 L904.8 418.12 L926.5 417.78 L948.2 412.81 L969.8 415.26" fill="none" stroke="#d6d4f2" stroke-width="0.8"/>
<rect x="585" y="324.5" width="13" height="6.6" rx="1.5" fill="#1f7ad2"/>
<rect x="626" y="324.5" width="12.6" height="6.6" rx="1.5" fill="#2aae8e"/>
<path d="M667 328 H680" stroke="#f4a62a" stroke-width="1.3"/>
<circle cx="673.6" cy="328" r="2.6" fill="#fff" stroke="#f4a62a" stroke-width="1.3"/>
<path d="M318.6 410.8 V419.8" stroke="#1c6fc2" stroke-width="3.2" stroke-linecap="round"/>
<path d="M320.4 406 V424" stroke="#8aa6cf" stroke-width="0.6"/>
<path d="M969.8 410.8 V419.8" stroke="#1c6fc2" stroke-width="3.2" stroke-linecap="round"/>
<path d="M969.2 406 V424" stroke="#8aa6cf" stroke-width="0.6"/>
<g fill="none" stroke="#52c4cf" stroke-width="1.1"><path d="M986.2 325 V331.2 M983.6 328.8 L986.2 331.4 L988.8 328.8 M982.6 329.5 V333.3 H989.8 V329.5"/></g>
</svg>
<div class="a" style="left:600.8px;top:324px;font-size:6.4px;color:#333;white-space:nowrap;line-height:8px">用电量</div>
<div class="a" style="left:641.7px;top:324px;font-size:6.4px;color:#333;white-space:nowrap;line-height:8px">节电量</div>
<div class="a" style="left:683px;top:324px;font-size:6.4px;color:#333;white-space:nowrap;line-height:8px">温度</div>
<div class="a" style="left:311.5px;top:327px;font-size:6.4px;color:#1f83d0;-webkit-text-stroke:0.2px #1f83d0;white-space:nowrap;line-height:8px">电量</div>
<div class="a" style="left:963px;top:327px;font-size:6.4px;color:#1f83d0;-webkit-text-stroke:0.2px #1f83d0;white-space:nowrap;line-height:8px">温度</div>
<div class="a xl" style="left:303.7px;top:407px">10月-27日</div>
<div class="a xl" style="left:345.8px;top:407px">10月-29日</div>
<div class="a xl" style="left:387.8px;top:407px">10月-31日</div>
<div class="a xl" style="left:429.8px;top:407px">11月-02日</div>
<div class="a xl" style="left:471.9px;top:407px">11月-04日</div>
<div class="a xl" style="left:513.9px;top:407px">11月-06日</div>
<div class="a xl" style="left:556.0px;top:407px">11月-08日</div>
<div class="a xl" style="left:598.0px;top:407px">11月-10日</div>
<div class="a xl" style="left:640.0px;top:407px">11月-12日</div>
<div class="a xl" style="left:682.1px;top:407px">11月-14日</div>
<div class="a xl" style="left:724.1px;top:407px">11月-16日</div>
<div class="a xl" style="left:766.1px;top:407px">11月-18日</div>
<div class="a xl" style="left:808.2px;top:407px">11月-20日</div>
<div class="a xl" style="left:850.2px;top:407px">11月-22日</div>
<div class="a xl" style="left:892.3px;top:407px">11月-24日</div>
<div class="a xl" style="left:934.3px;top:407px">11月-26日</div>
<div class="a yl" style="left:284px;top:338.0px">300 度</div>
<div class="a yl" style="left:284px;top:348.2px">250 度</div>
<div class="a yl" style="left:284px;top:358.5px">200 度</div>
<div class="a yl" style="left:284px;top:368.8px">150 度</div>
<div class="a yl" style="left:284px;top:379.0px">100 度</div>
<div class="a yl" style="left:284px;top:389.2px">50 度</div>
<div class="a yl" style="left:284px;top:399.5px">0 度</div>
<div class="a yr" style="left:973.7px;top:337.7px">21℃</div>
<div class="a yr" style="left:973.7px;top:346.5px">18℃</div>
<div class="a yr" style="left:973.7px;top:355.4px">15℃</div>
<div class="a yr" style="left:973.7px;top:364.2px">12℃</div>
<div class="a yr" style="left:973.7px;top:373.0px">9℃</div>
<div class="a yr" style="left:973.7px;top:381.8px">6℃</div>
<div class="a yr" style="left:973.7px;top:390.7px">3℃</div>
<div class="a yr" style="left:973.7px;top:399.5px">0℃</div>
<!--/CHART-->
</body></html>
